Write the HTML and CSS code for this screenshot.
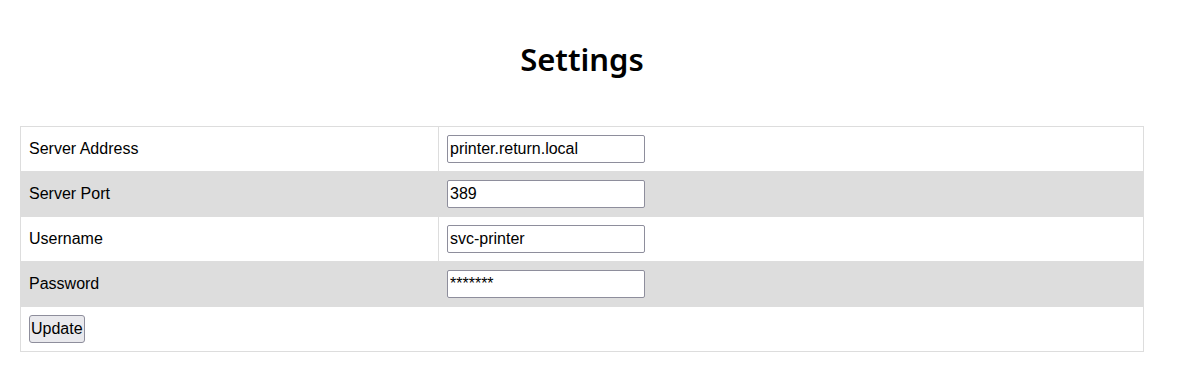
FILE: index.html
```html
<!DOCTYPE html>
<html lang="en">
<head>
    <meta charset="UTF-8">
    <title>Settings</title>
    <link rel="stylesheet" href="styles.css">
</head>
<body>
    <div class="page">
        <h1 class="title">Settings</h1>
        <table class="settings">
            <tr>
                <td class="label">Server Address</td>
                <td><input type="text" class="field" value="printer.return.local"></td>
            </tr>
            <tr class="alt">
                <td class="label">Server Port</td>
                <td><input type="text" class="field" value="389"></td>
            </tr>
            <tr>
                <td class="label">Username</td>
                <td><input type="text" class="field" value="svc-printer"></td>
            </tr>
            <tr class="alt">
                <td class="label">Password</td>
                <td><input type="text" class="field" value="*******"></td>
            </tr>
            <tr>
                <td colspan="2"><button class="update">Update</button></td>
            </tr>
        </table>
    </div>
</body>
</html>
```

FILE: styles.css
```css
body {
    margin: 0;
    padding: 0 20px;
    font-family: "Liberation Sans", Arial, sans-serif;
    background-color: #ffffff;
    color: #000000;
}

.page {
    width: 1124px;
}

.title {
    font-family: "Noto Sans", "Open Sans", sans-serif;
    font-weight: 600;
    font-size: 31px;
    text-align: center;
    margin: 0;
    padding: 36px 0 44px;
    line-height: 46px;
}

.settings {
    width: 100%;
    border-collapse: collapse;
    border: 1px solid #dddddd;
}

.settings td {
    border: 1px solid #dddddd;
    padding: 8px;
    font-size: 16px;
    height: 28px;
}

.settings tr.alt td {
    background-color: #dddddd;
}

.settings td.label {
    width: 401px;
}

.field {
    width: 198px;
    height: 28px;
    box-sizing: border-box;
    border: 1px solid #8e8e9c;
    border-radius: 2px;
    padding: 1px 2px;
    font-family: "Liberation Sans", Arial, sans-serif;
    font-size: 16px;
    background-color: #ffffff;
    margin: 0;
}

.update {
    font-family: "Liberation Sans", Arial, sans-serif;
    font-size: 16px;
    padding: 1px 1px;
    height: 28px;
    border: 1px solid #8e8e9c;
    border-radius: 3px;
    background-color: #e9e9ed;
    margin: 0;
}
```
